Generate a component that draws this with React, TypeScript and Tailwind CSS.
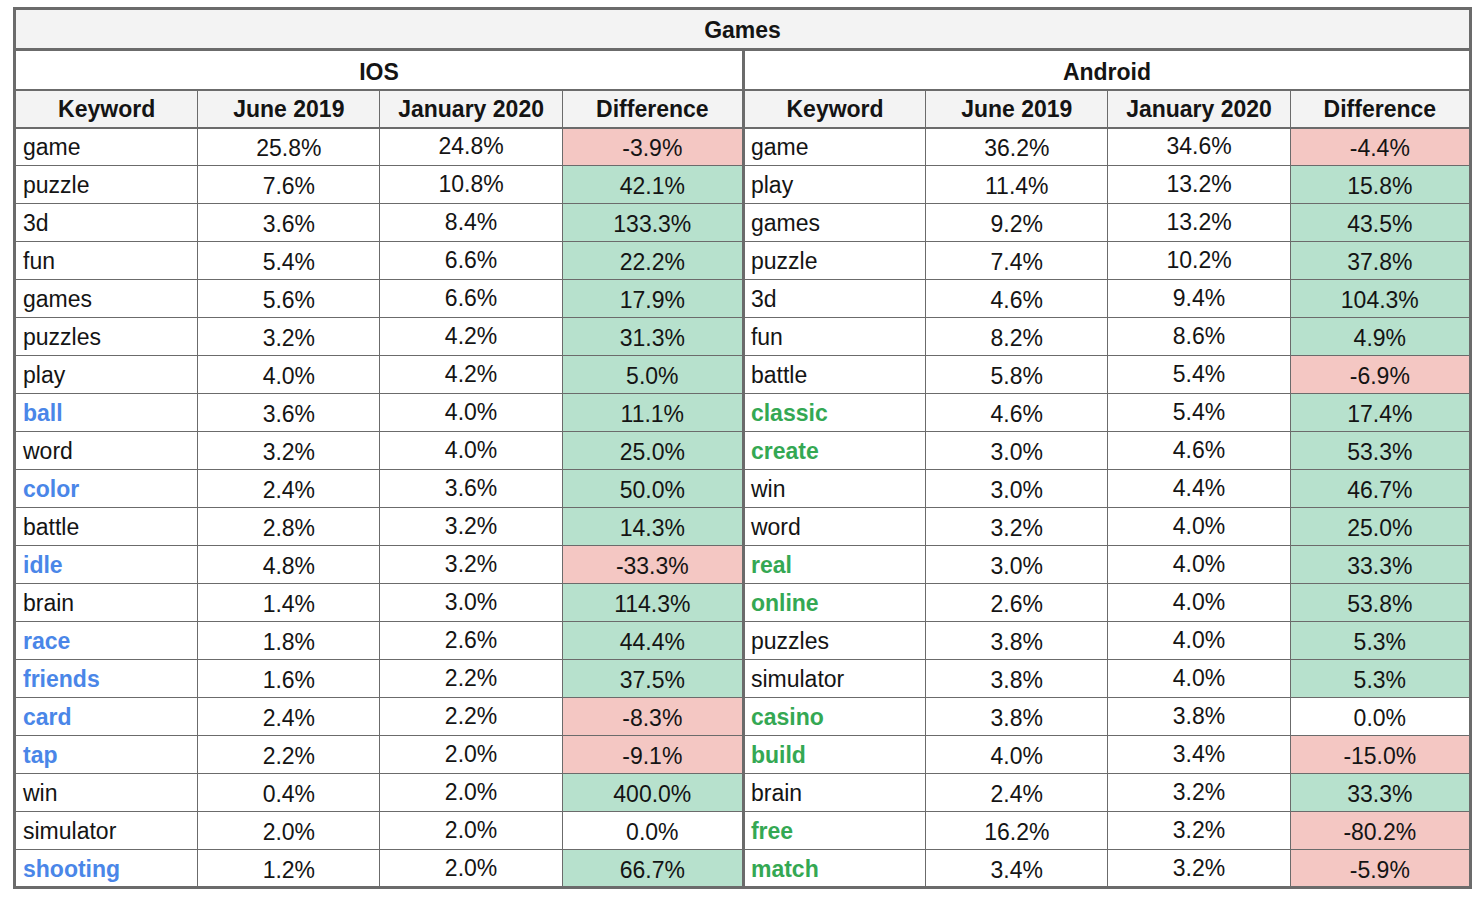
import React from "react";

type Row = [string, string, string, string, "r" | "g" | "w", boolean];

const ios: Row[] = [
  ["game", "25.8%", "24.8%", "-3.9%", "r", false],
  ["puzzle", "7.6%", "10.8%", "42.1%", "g", false],
  ["3d", "3.6%", "8.4%", "133.3%", "g", false],
  ["fun", "5.4%", "6.6%", "22.2%", "g", false],
  ["games", "5.6%", "6.6%", "17.9%", "g", false],
  ["puzzles", "3.2%", "4.2%", "31.3%", "g", false],
  ["play", "4.0%", "4.2%", "5.0%", "g", false],
  ["ball", "3.6%", "4.0%", "11.1%", "g", true],
  ["word", "3.2%", "4.0%", "25.0%", "g", false],
  ["color", "2.4%", "3.6%", "50.0%", "g", true],
  ["battle", "2.8%", "3.2%", "14.3%", "g", false],
  ["idle", "4.8%", "3.2%", "-33.3%", "r", true],
  ["brain", "1.4%", "3.0%", "114.3%", "g", false],
  ["race", "1.8%", "2.6%", "44.4%", "g", true],
  ["friends", "1.6%", "2.2%", "37.5%", "g", true],
  ["card", "2.4%", "2.2%", "-8.3%", "r", true],
  ["tap", "2.2%", "2.0%", "-9.1%", "r", true],
  ["win", "0.4%", "2.0%", "400.0%", "g", false],
  ["simulator", "2.0%", "2.0%", "0.0%", "w", false],
  ["shooting", "1.2%", "2.0%", "66.7%", "g", true],
];

const android: Row[] = [
  ["game", "36.2%", "34.6%", "-4.4%", "r", false],
  ["play", "11.4%", "13.2%", "15.8%", "g", false],
  ["games", "9.2%", "13.2%", "43.5%", "g", false],
  ["puzzle", "7.4%", "10.2%", "37.8%", "g", false],
  ["3d", "4.6%", "9.4%", "104.3%", "g", false],
  ["fun", "8.2%", "8.6%", "4.9%", "g", false],
  ["battle", "5.8%", "5.4%", "-6.9%", "r", false],
  ["classic", "4.6%", "5.4%", "17.4%", "g", true],
  ["create", "3.0%", "4.6%", "53.3%", "g", true],
  ["win", "3.0%", "4.4%", "46.7%", "g", false],
  ["word", "3.2%", "4.0%", "25.0%", "g", false],
  ["real", "3.0%", "4.0%", "33.3%", "g", true],
  ["online", "2.6%", "4.0%", "53.8%", "g", true],
  ["puzzles", "3.8%", "4.0%", "5.3%", "g", false],
  ["simulator", "3.8%", "4.0%", "5.3%", "g", false],
  ["casino", "3.8%", "3.8%", "0.0%", "w", true],
  ["build", "4.0%", "3.4%", "-15.0%", "r", true],
  ["brain", "2.4%", "3.2%", "33.3%", "g", false],
  ["free", "16.2%", "3.2%", "-80.2%", "r", true],
  ["match", "3.4%", "3.2%", "-5.9%", "r", true],
];

function bg(c: "r" | "g" | "w") {
  if (c === "r") return "bg-[#f4c7c3]";
  if (c === "g") return "bg-[#b7e1cd]";
  return "bg-white";
}

const cell = "border border-[#6b6b6b] text-[23px] leading-none";

export default function App() {
  const headers = ["Keyword", "June 2019", "January 2020", "Difference"];
  return (
    <div
      className="w-[1482px] h-[900px] bg-white pt-[7px] pl-[13px]"
      style={{ fontFamily: '"Liberation Sans", Arial, sans-serif' }}
    >
      <table className="table-fixed border-collapse w-[1459px] border-[3px] border-[#6b6b6b] text-[#141414]">
        <colgroup>
          <col className="w-[183px]" />
          <col className="w-[182px]" />
          <col className="w-[182px]" />
          <col className="w-[181px]" />
          <col className="w-[182px]" />
          <col className="w-[182px]" />
          <col className="w-[182px]" />
          <col className="w-[180px]" />
        </colgroup>
        <tbody>
          <tr className="h-[41px]">
            <td
              colSpan={8}
              className="border-[3px] border-[#6b6b6b] bg-[#f3f3f3] text-center font-bold text-[23px] leading-none pt-[2px]"
            >
              Games
            </td>
          </tr>
          <tr className="h-[40px]">
            <td
              colSpan={4}
              className="border-[#6b6b6b] border-t-[3px] border-b-2 border-r-[3px] bg-white text-center font-bold text-[23px] leading-none pt-[6px]"
            >
              IOS
            </td>
            <td
              colSpan={4}
              className="border-[#6b6b6b] border-t-[3px] border-b-2 border-l-[3px] bg-white text-center font-bold text-[23px] leading-none pt-[6px]"
            >
              Android
            </td>
          </tr>
          <tr className="h-[38px]">
            {[...headers, ...headers].map((h, i) => (
              <td
                key={i}
                className={`${cell} border-t-2 border-b-2 bg-[#f3f3f3] text-center font-bold pt-[2px] ${
                  i === 3 ? "border-r-[3px]" : ""
                } ${i === 4 ? "border-l-[3px]" : ""}`}
              >
                {h}
              </td>
            ))}
          </tr>
          {ios.map((r, i) => {
            const a = android[i];
            return (
              <tr key={i} className="h-[38px]">
                <td
                  className={`${cell} pl-[7px] pt-[2px] ${
                    r[5] ? "font-bold text-[#4a86e8]" : ""
                  }`}
                >
                  {r[0]}
                </td>
                <td className={`${cell} text-center pt-[4px]`}>{r[1]}</td>
                <td className={`${cell} text-center`}>{r[2]}</td>
                <td className={`${cell} text-center pt-[4px] border-r-[3px] ${bg(r[4])}`}>
                  {r[3]}
                </td>
                <td
                  className={`${cell} pl-[6px] pt-[2px] border-l-[3px] ${
                    a[5] ? "font-bold text-[#34a853]" : ""
                  }`}
                >
                  {a[0]}
                </td>
                <td className={`${cell} text-center pt-[4px]`}>{a[1]}</td>
                <td className={`${cell} text-center`}>{a[2]}</td>
                <td className={`${cell} text-center pt-[4px] ${bg(a[4])}`}>{a[3]}</td>
              </tr>
            );
          })}
        </tbody>
      </table>
    </div>
  );
}
